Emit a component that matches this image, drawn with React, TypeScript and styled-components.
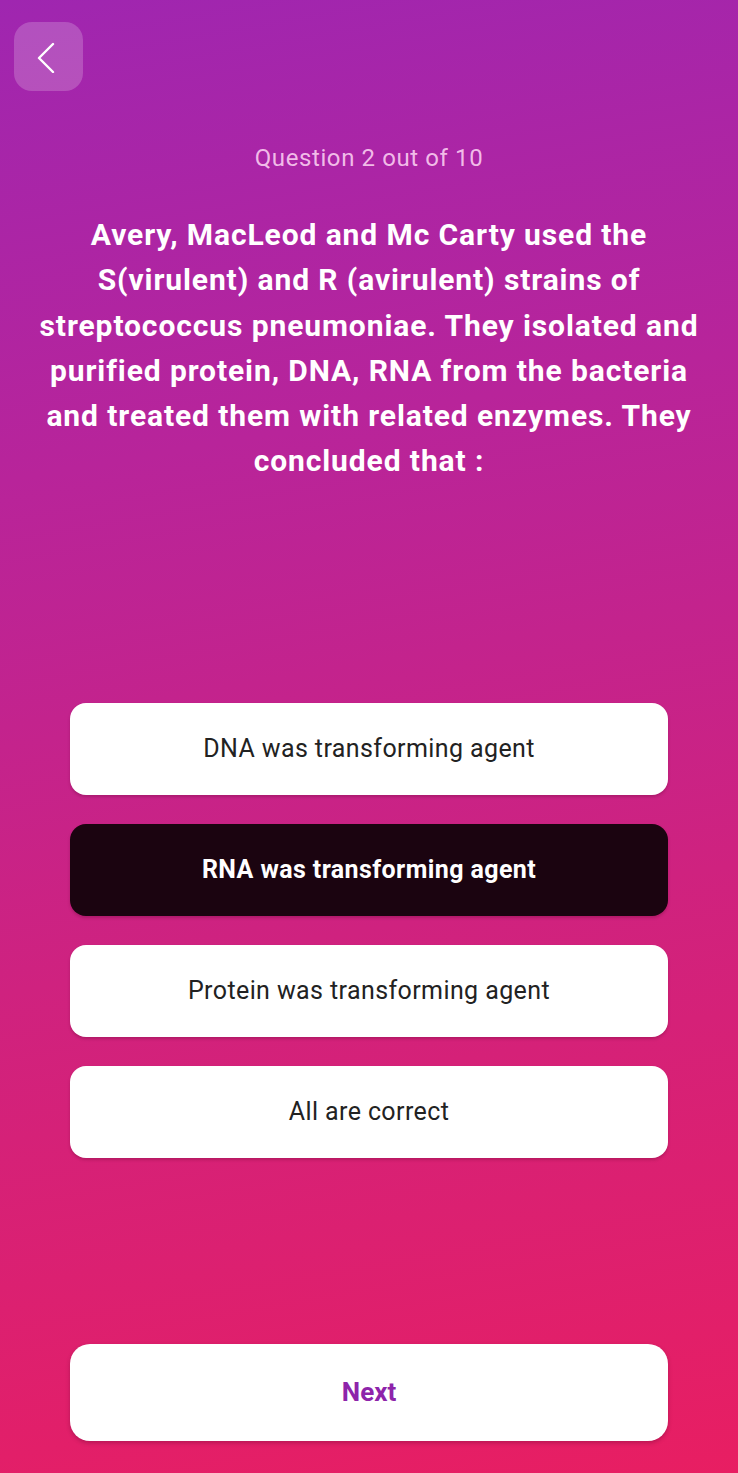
import React, { useState } from "react";
import styled, { createGlobalStyle } from "styled-components";

const GlobalStyle = createGlobalStyle`
  html, body { margin: 0; padding: 0; }
  body { font-family: Roboto, "Noto Sans", Arial, sans-serif; }
  * { box-sizing: border-box; }
`;

const Page = styled.div`
  width: 738px;
  height: 1473px;
  overflow: hidden;
  background: linear-gradient(170deg, #9f26b0 0%, #b8249a 30%, #cf227f 62%, #e81e62 100%);
  display: flex;
  flex-direction: column;
  align-items: center;
`;

const TopBar = styled.div`
  width: 100%;
  padding: 22px 0 0 14px;
`;

const BackButton = styled.button`
  width: 69px;
  height: 69px;
  border: none;
  border-radius: 18px;
  background: rgba(255, 255, 255, 0.2);
  display: flex;
  align-items: center;
  justify-content: center;
  padding: 0 6px 0 0;
  cursor: pointer;
`;

const Counter = styled.div`
  margin-top: 53px;
  font-size: 24px;
  line-height: 28px;
  letter-spacing: 0.6px;
  color: rgba(255, 215, 245, 0.85);
  font-weight: 400;
`;

const QuestionText = styled.h1`
  margin: 40px 0 0;
  padding: 0 28px;
  font-size: 30px;
  line-height: 45.3px;
  letter-spacing: 0.9px;
  font-weight: 700;
  color: #ffffff;
  text-align: center;
`;

const Options = styled.div`
  margin-top: 219px;
  width: 598px;
  display: flex;
  flex-direction: column;
  gap: 29px;
`;

const Option = styled.button<{ $selected?: boolean }>`
  height: 92px;
  border: none;
  border-radius: 16px;
  background: ${(p) => (p.$selected ? "#1b0410" : "#ffffff")};
  color: ${(p) => (p.$selected ? "#ffffff" : "#222222")};
  font-family: Roboto, "Noto Sans", Arial, sans-serif;
  font-size: 25px;
  letter-spacing: 0.4px;
  font-weight: ${(p) => (p.$selected ? 700 : 400)};
  box-shadow: 0 2px 3px rgba(80, 0, 40, 0.25);
  cursor: pointer;
`;

const NextButton = styled.button`
  margin-top: 186px;
  width: 598px;
  height: 97px;
  border: none;
  border-radius: 20px;
  background: #ffffff;
  color: #8e24aa;
  font-family: Roboto, "Noto Sans", Arial, sans-serif;
  font-size: 26px;
  font-weight: 700;
  box-shadow: 0 2px 4px rgba(80, 0, 40, 0.3);
  cursor: pointer;
`;

const options = [
  "DNA was transforming agent",
  "RNA was transforming agent",
  "Protein was transforming agent",
  "All are correct",
];

export default function App() {
  const [selected, setSelected] = useState(1);
  return (
    <>
      <GlobalStyle />
      <Page>
        <TopBar>
          <BackButton aria-label="Back">
            <svg width="20" height="32" viewBox="0 0 20 32" fill="none">
              <path d="M17 3 L3 17 L17 31" stroke="#ffffff" strokeWidth="2.4" strokeLinecap="round" strokeLinejoin="round" />
            </svg>
          </BackButton>
        </TopBar>
        <Counter>Question 2 out of 10</Counter>
        <QuestionText>
          Avery, MacLeod and Mc Carty used the S(virulent) and R (avirulent) strains of streptococcus pneumoniae. They isolated and purified protein, DNA, RNA from the bacteria and treated them with related enzymes. They concluded that :
        </QuestionText>
        <Options>
          {options.map((o, i) => (
            <Option key={o} $selected={i === selected} onClick={() => setSelected(i)}>
              {o}
            </Option>
          ))}
        </Options>
        <NextButton>Next</NextButton>
      </Page>
    </>
  );
}
